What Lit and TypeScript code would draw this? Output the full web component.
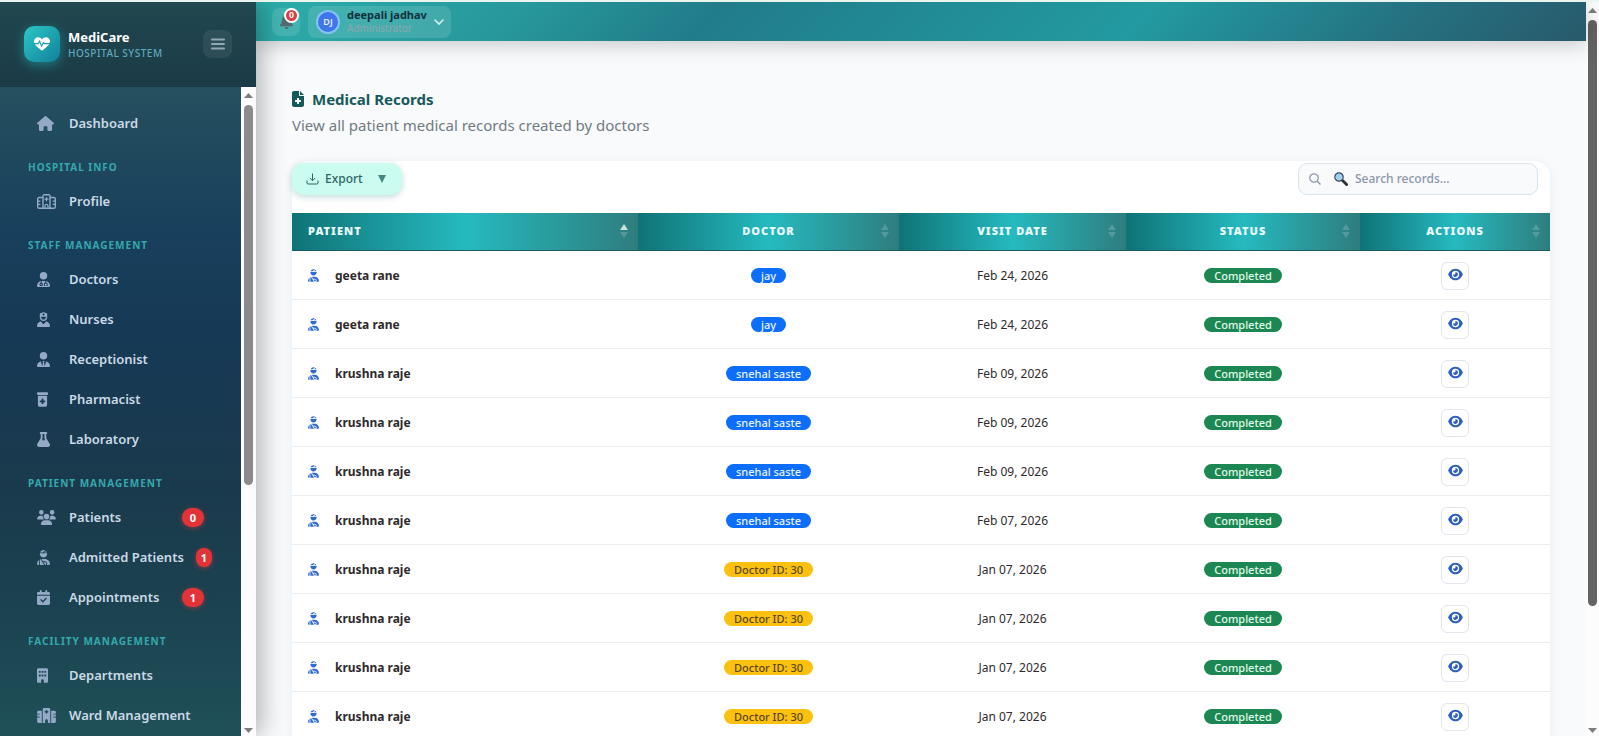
import { LitElement, html, css, svg, nothing } from "lit";
import { customElement } from "lit/decorators.js";
import { classMap } from "lit/directives/class-map.js";

interface Glyph {
  w: number;
  d: string;
}

const GLYPHS: Record<string, Glyph> = {
  house: {
    w: 576,
    d: "M575.8 255.5c0 18-15 32.1-32 32.1h-32l.7 160.2c0 2.7-.2 5.4-.5 8.1V472c0 22.1-17.9 40-40 40H456c-1.1 0-2.2 0-3.3-.1c-1.4 .1-2.8 .1-4.2 .1H416 392c-22.1 0-40-17.9-40-40V448 384c0-17.7-14.3-32-32-32H256c-17.7 0-32 14.3-32 32v64 24c0 22.1-17.9 40-40 40H160 128.1c-1.5 0-3-.1-4.5-.2c-1.2 .1-2.4 .2-3.6 .2H104c-22.1 0-40-17.9-40-40V360c0-.9 0-1.9 .1-2.8V287.6H32c-18 0-32-14-32-32.1c0-9 3-17 10-24L266.4 8c7-7 15-8 22-8s15 2 21 7L564.8 231.5c8 7 12 15 11 24z",
  },
  doctor: {
    w: 448,
    d: "M224 256A128 128 0 1 0 224 0a128 128 0 1 0 0 256zm-96 55.2C54 332.9 0 401.3 0 482.3C0 498.7 13.3 512 29.7 512H418.3c16.4 0 29.7-13.3 29.7-29.7c0-81-54-149.4-128-171.1V362c27.6 7.1 48 32.2 48 62v40c0 8.8-7.2 16-16 16H336c-8.8 0-16-7.2-16-16s7.2-16 16-16V424c0-17.7-14.3-32-32-32s-32 14.3-32 32v24c8.8 0 16 7.2 16 16s-7.2 16-16 16H256c-8.8 0-16-7.2-16-16V424c0-29.8 20.4-54.9 48-62V304.9c-6-.6-12.1-.9-18.3-.9H178.3c-6.2 0-12.3 .3-18.3 .9v65.4c23.1 6.9 40 28.3 40 53.7c0 30.9-25.1 56-56 56s-56-25.1-56-56c0-25.4 16.9-46.8 40-53.7V311.2zM144 448a24 24 0 1 0 0-48 24 24 0 1 0 0 48z",
  },
  nurse: {
    w: 448,
    d: "M96 128V70.2c0-13.3 8.3-25.3 20.8-30l96-36c7.2-2.7 15.2-2.7 22.5 0l96 36c12.5 4.7 20.8 16.6 20.8 30V128h-.3c.2 2.6 .3 5.3 .3 8v40c0 70.7-57.3 128-128 128s-128-57.3-128-128V136c0-2.7 .1-5.4 .3-8H96zm48 48c0 44.2 35.8 80 80 80s80-35.8 80-80V160H144v16zM111.9 327.7c10.5-3.4 21.8 .4 29.4 8.5l71 75.5c6.3 6.7 17 6.7 23.3 0l71-75.5c7.6-8.1 18.9-11.9 29.4-8.5C401 348.6 448 409.4 448 481.3c0 17-13.8 30.7-30.7 30.7H30.7C13.8 512 0 498.2 0 481.3c0-71.9 47-132.7 111.9-153.6zM208 48V64H192c-4.4 0-8 3.6-8 8V88c0 4.4 3.6 8 8 8h16v16c0 4.4 3.6 8 8 8h16c4.4 0 8-3.6 8-8V96h16c4.4 0 8-3.6 8-8V72c0-4.4-3.6-8-8-8H240V48c0-4.4-3.6-8-8-8H216c-4.4 0-8 3.6-8 8z",
  },
  tie: {
    w: 448,
    d: "M224 256A128 128 0 1 0 224 0a128 128 0 1 0 0 256zM209.1 359.2l-18.6-31c-6.4-10.7 1.3-24.2 13.7-24.2H224h19.7c12.4 0 20.1 13.6 13.7 24.2l-18.6 31 33.4 123.9 39.5-161.2c77.2 12 136.3 78.8 136.3 159.4c0 17-13.8 30.7-30.7 30.7H265 183 30.7C13.8 512 0 498.2 0 481.3c0-80.6 59.1-147.4 136.3-159.4l39.5 161.2 33.4-123.9z",
  },
  bottle: {
    w: 384,
    d: "M0 32C0 14.3 14.3 0 32 0H352c17.7 0 32 14.3 32 32V64c0 17.7-14.3 32-32 32H32C14.3 96 0 81.7 0 64V32zm32 96H352V448c0 35.3-28.7 64-64 64H96c-35.3 0-64-28.7-64-64V128zM160 240v48H112c-8.8 0-16 7.2-16 16v32c0 8.8 7.2 16 16 16h48v48c0 8.8 7.2 16 16 16h32c8.8 0 16-7.2 16-16V352h48c8.8 0 16-7.2 16-16V304c0-8.8-7.2-16-16-16H224V240c0-8.8-7.2-16-16-16H176c-8.8 0-16 7.2-16 16z",
  },
  flask: {
    w: 448,
    d: "M437.2 403.5L320 215V64h8c13.3 0 24-10.7 24-24V24c0-13.3-10.7-24-24-24H120c-13.3 0-24 10.7-24 24v16c0 13.3 10.7 24 24 24h8v151L10.8 403.5C-18.5 450.6 15.3 512 70.9 512h306.2c55.7 0 89.4-61.5 60.1-108.5zM170 280l16.100-37.600c3.7-5.2 5.8-11.6 5.8-18.4V64h64v160c0 6.9 2.2 13.2 5.8 18.4l16.200 37.600z",
  },
  users: {
    w: 640,
    d: "M144 0a80 80 0 1 1 0 160A80 80 0 1 1 144 0zM512 0a80 80 0 1 1 0 160A80 80 0 1 1 512 0zM0 298.7C0 239.8 47.8 192 106.7 192h42.7c15.9 0 31 3.5 44.6 9.7c-1.3 7.2-1.9 14.7-1.9 22.3c0 38.2 16.8 72.5 43.3 96c-.2 0-.4 0-.7 0H21.3C9.6 320 0 310.4 0 298.7zM405.3 320c-.2 0-.4 0-.7 0c26.6-23.5 43.3-57.8 43.3-96c0-7.6-.7-15-1.9-22.3c13.6-6.3 28.7-9.7 44.6-9.7h42.7C592.2 192 640 239.8 640 298.7c0 11.8-9.6 21.3-21.3 21.3H405.3zM224 224a96 96 0 1 1 192 0 96 96 0 1 1 -192 0zM128 485.3C128 411.7 187.7 352 261.3 352H378.7C452.3 352 512 411.7 512 485.3c0 14.7-11.9 26.7-26.7 26.7H154.7c-14.7 0-26.7-11.9-26.7-26.7z",
  },
  injured: {
    w: 448,
    d: "M240 80H342.7c-7.9-19.5-20.4-36.5-36.2-49.9L240 80zm37.7-68.2C261.3 4.2 243.2 0 224 0c-53.7 0-99.3 33.1-118.7 80h81.4l91-68.2zM224 256c70.7 0 128-57.3 128-128c0-5.4-.3-10.8-1-16H97c-.7 5.2-1 10.6-1 16c0 70.7 57.3 128 128 128zM124 312.4c-9.7 3.1-19.1 7-28 11.7V512H243.7L181.5 408.2 124 312.4zm33-7.2L204.3 384H272c44.2 0 80 35.8 80 80c0 18-6 34.6-16 48h82.3c16.4 0 29.7-13.3 29.7-29.7C448 383.8 368.2 304 269.7 304H178.3c-7.2 0-14.3 .4-21.3 1.3zM0 482.3C0 498.7 13.3 512 29.7 512H64V345.4C24.9 378.1 0 427.3 0 482.3zM320 464c0-26.5-21.5-48-48-48H223.5l57.1 95.2C303 507.2 320 487.6 320 464z",
  },
  calendar: {
    w: 448,
    d: "M128 0c17.7 0 32 14.3 32 32V64H288V32c0-17.7 14.3-32 32-32s32 14.3 32 32V64h48c26.5 0 48 21.5 48 48v48H0V112C0 85.5 21.5 64 48 64H96V32c0-17.7 14.3-32 32-32zM0 192H448V464c0 26.5-21.5 48-48 48H48c-26.5 0-48-21.5-48-48V192zM329 305c9.4-9.4 9.4-24.6 0-33.9s-24.6-9.4-33.9 0l-95 95-47-47c-9.4-9.4-24.6-9.4-33.9 0s-9.4 24.6 0 33.9l64 64c9.4 9.4 24.6 9.4 33.9 0L329 305z",
  },
  building: {
    w: 384,
    d: "M48 0C21.5 0 0 21.5 0 48V464c0 26.5 21.5 48 48 48h96V432c0-26.5 21.5-48 48-48s48 21.5 48 48v80h96c26.5 0 48-21.5 48-48V48c0-26.5-21.5-48-48-48H48zM64 224h64v64H64zM160 224h64v64h-64zM256 224h64v64h-64zM64 96h64v64H64zM160 96h64v64h-64zM256 96h64v64h-64z",
  },
  hospital: {
    w: 640,
    d: "M192 48c0-26.5 21.5-48 48-48H400c26.5 0 48 21.5 48 48V512H368V432c0-26.5-21.5-48-48-48s-48 21.5-48 48v80H192V48zM48 96H160V512H48c-26.5 0-48-21.5-48-48V320H80c8.8 0 16-7.2 16-16s-7.2-16-16-16H0V224H80c8.8 0 16-7.2 16-16s-7.2-16-16-16H0V144c0-26.5 21.5-48 48-48zm544 0c26.5 0 48 21.5 48 48v48H560c-8.8 0-16 7.2-16 16s7.2 16 16 16h80v64H560c-8.8 0-16 7.2-16 16s7.2 16 16 16h80V464c0 26.5-21.5 48-48 48H480V96H592zM312 64c-8.8 0-16 7.2-16 16v24H272c-8.8 0-16 7.2-16 16v16c0 8.8 7.2 16 16 16h24v24c0 8.8 7.2 16 16 16h16c8.8 0 16-7.2 16-16V152h24c8.8 0 16-7.2 16-16V120c0-8.8-7.2-16-16-16H344V80c0-8.8-7.2-16-16-16H312z",
  },
  record: {
    w: 384,
    d: "M64 0C28.7 0 0 28.7 0 64V448c0 35.3 28.7 64 64 64H320c35.3 0 64-28.7 64-64V160H256c-17.7 0-32-14.3-32-32V0H64zM256 0V128H384L256 0zM160 240c0-8.8 7.2-16 16-16h32c8.8 0 16 7.2 16 16v48h48c8.8 0 16 7.2 16 16v32c0 8.8-7.2 16-16 16H224v48c0 8.8-7.2 16-16 16H176c-8.8 0-16-7.2-16-16V352H112c-8.8 0-16-7.2-16-16V304c0-8.8 7.2-16 16-16h48V240z",
  },
  eye: {
    w: 576,
    d: "M288 32c-80.8 0-145.5 36.8-192.6 80.6C48.6 156 17.3 208 2.5 243.7c-3.3 7.9-3.3 16.7 0 24.6C17.3 304 48.6 356 95.4 399.4C142.5 443.2 207.2 480 288 480s145.5-36.8 192.6-80.6c46.8-43.5 78.1-95.4 93-131.1c3.3-7.9 3.3-16.7 0-24.6c-14.9-35.7-46.2-87.7-93-131.1C433.5 68.8 368.8 32 288 32zM144 256a144 144 0 1 1 288 0 144 144 0 1 1 -288 0zm144-64c0 35.3-28.7 64-64 64c-7.1 0-13.9-1.2-20.3-3.3c-5.5-1.8-11.9 1.6-11.7 7.4c.3 6.9 1.3 13.8 3.2 20.7c13.7 51.2 66.4 81.6 117.6 67.9s81.6-66.4 67.9-117.6c-11.1-41.5-47.8-69.4-88.6-71.1c-5.8-.2-9.2 6.1-7.4 11.7c2.1 6.4 3.3 13.2 3.3 20.3z",
  },
  bell: {
    w: 448,
    d: "M224 0c-17.7 0-32 14.3-32 32V51.2C119 66 64 130.6 64 208v18.8c0 47-17.3 92.4-48.5 127.6l-7.4 8.3c-8.4 9.4-10.4 22.9-5.3 34.4S19.4 416 32 416H416c12.6 0 24-7.4 29.2-18.9s3.1-25-5.3-34.4l-7.4-8.3C401.3 319.2 384 273.9 384 226.8V208c0-77.4-55-142-128-156.8V32c0-17.7-14.3-32-32-32zm45.3 493.3c12-12 18.7-28.3 18.7-45.3H224 160c0 17 6.7 33.3 18.7 45.3s28.3 18.7 45.3 18.7s33.3-6.7 45.3-18.7z",
  },
};

const glyph = (name: string, size: number) => {
  const g = GLYPHS[name];
  return html`<svg
    class="glyph"
    viewBox="0 0 ${g.w} 512"
    width=${Math.round((g.w / 512) * size)}
    height=${size}
    aria-hidden="true"
  >
    ${svg`<path fill="currentColor" fill-rule="evenodd" d=${g.d}></path>`}
  </svg>`;
};

const hospitalOutline = html`<svg class="glyph" viewBox="0 0 19 15" width="19" height="15" aria-hidden="true">
  <g fill="none" stroke="currentColor" stroke-width="1.4">
    <path d="M6 14.3V2.2C6 1.3 6.6.7 7.4.7h4.2c.8 0 1.4.6 1.4 1.5v12.1" />
    <path d="M6 3.5H2.2C1.300 3.500.7 4.100.7 5v7.800c0 .9.6 1.500 1.500 1.500h14.600c.9 0 1.500-.6 1.500-1.500V5c0-.9-.6-1.500-1.500-1.500H13" />
    <path d="M.7 7.200h2.600M.7 10.400h2.600M15.700 7.200h2.600M15.700 10.400h2.600" stroke-width="1.200" />
    <path d="M9.500 3.200v4M7.500 5.200h4" stroke-width="1.300" />
    <path d="M8 14.300v-2.600c0-.8.6-1.400 1.500-1.400s1.500.6 1.500 1.400v2.600" stroke-width="1.200" />
  </g>
</svg>`;

interface NavItem {
  icon: string;
  label: string;
  count?: number;
  tight?: boolean;
}

const NAV: { title?: string; items: NavItem[] }[] = [
  { items: [{ icon: "house", label: "Dashboard" }] },
  { title: "Hospital Info", items: [{ icon: "outline", label: "Profile" }] },
  {
    title: "Staff Management",
    items: [
      { icon: "doctor", label: "Doctors" },
      { icon: "nurse", label: "Nurses" },
      { icon: "tie", label: "Receptionist" },
      { icon: "bottle", label: "Pharmacist" },
      { icon: "flask", label: "Laboratory" },
    ],
  },
  {
    title: "Patient Management",
    items: [
      { icon: "users", label: "Patients", count: 0 },
      { icon: "injured", label: "Admitted Patients", count: 1, tight: true },
      { icon: "calendar", label: "Appointments", count: 1 },
    ],
  },
  {
    title: "Facility Management",
    items: [
      { icon: "building", label: "Departments" },
      { icon: "hospital", label: "Ward Management" },
    ],
  },
];

@customElement("side-bar")
class SideBar extends LitElement {
  static styles = css`
    :host {
      display: flex;
      flex-direction: column;
      width: 256px;
      min-height: 0;
      flex: none;
      position: relative;
      z-index: 2;
      background: linear-gradient(180deg, #25505f 12%, #183f5c 32%, #163955 46%, #1a3a4c 66%, #1b4250 82%, #1f5058 100%);
      box-shadow: 4px 0 24px rgba(0, 0, 0, 0.32);
      color: #cbd9e6;
    }
    .glyph {
      display: block;
    }
    .brand {
      display: flex;
      align-items: center;
      gap: 8px;
      height: 85px;
      box-sizing: border-box;
      padding: 0 24px;
      background: linear-gradient(180deg, #21474f, #1b3b47);
      border-bottom: 1px solid #1b3846;
    }
    .logo {
      display: grid;
      place-items: center;
      width: 36px;
      height: 36px;
      border-radius: 10px;
      background: linear-gradient(135deg, #2cc7c6, #118099);
      box-shadow: 0 3px 12px rgba(38, 198, 198, 0.45);
    }
    .names {
      flex: 1;
      display: flex;
      flex-direction: column;
    }
    .name {
      font-size: 13px;
      line-height: 17px;
      font-weight: 700;
      color: #fff;
    }
    .sub {
      font-size: 10px;
      line-height: 14px;
      font-weight: 500;
      letter-spacing: 0.5px;
      text-transform: uppercase;
      color: #5ea9bd;
    }
    .toggle {
      display: grid;
      place-items: center;
      width: 29px;
      height: 28px;
      padding: 0;
      border: 0;
      border-radius: 8px;
      background: rgba(255, 255, 255, 0.07);
      color: #93a8b5;
    }
    .body {
      flex: 1;
      min-height: 0;
      display: flex;
    }
    nav {
      flex: 1;
      overflow: hidden;
      padding: 16px 0 0 28px;
    }
    .title {
      margin: 0;
      padding: 14px 0 8px;
      height: 38px;
      box-sizing: border-box;
      font-size: 10px;
      line-height: 20px;
      font-weight: 700;
      letter-spacing: 1px;
      text-transform: uppercase;
      color: #36a8ad;
    }
    ul {
      margin: 0;
      padding: 0;
      list-style: none;
    }
    .link {
      display: flex;
      align-items: center;
      height: 40px;
      width: 176px;
      padding-left: 9px;
      box-sizing: border-box;
      color: inherit;
      text-decoration: none;
      font-size: 13px;
      line-height: 20px;
      font-weight: 600;
      white-space: nowrap;
    }
    .ico {
      flex: none;
      width: 32px;
      color: #93a9c6;
    }
    .count {
      flex: none;
      margin-left: auto;
      padding: 0 8px;
      border-radius: 10px;
      background: #e43338;
      box-shadow: 0 1px 5px rgba(239, 60, 60, 0.5);
      color: #fff;
      font-size: 11px;
      line-height: 19px;
      font-weight: 700;
    }
    .count.tight {
      margin-left: 12px;
      padding: 0 5px;
    }
    .track {
      flex: none;
      display: flex;
      flex-direction: column;
      align-items: center;
      justify-content: space-between;
      width: 15px;
      padding: 6px 0 3px;
      box-sizing: border-box;
      background: #fcfcfc;
    }
    .thumb {
      flex: 1;
      width: 9px;
      margin: 7px 0 243px;
      border-radius: 5px;
      background: #8b8b8b;
    }
  `;

  render() {
    return html`
      <header class="brand">
        <span class="logo">
          <svg class="glyph" viewBox="0 0 16 14" width="16" height="14" aria-hidden="true">
            <path fill="#fff" d="M8 13.700C4.500 11 0 8 0 4.300 0 2 1.800.3 4 .3c1.600 0 3 .8 4 2.200C9 1.100 10.400.3 12 .3c2.200 0 4 1.700 4 4C16 8 11.500 11 8 13.700z" />
            <path fill="none" stroke="#1d9dab" stroke-width="1.100" d="M0 6.600h4.300l1.300-2.300 2 4.600 1.800-3.300.9 1H16" />
          </svg>
        </span>
        <span class="names">
          <span class="name">MediCare</span>
          <span class="sub">Hospital System</span>
        </span>
        <button class="toggle" type="button" aria-label="Toggle menu">
          <svg class="glyph" viewBox="0 0 14 12" width="14" height="12" aria-hidden="true">
            <path d="M1 1.500h12M1 6h12M1 10.500h12" stroke="currentColor" stroke-width="2" stroke-linecap="round" />
          </svg>
        </button>
      </header>
      <div class="body">
        <nav>
          ${NAV.map(
            (group) => html`
              ${group.title ? html`<h2 class="title">${group.title}</h2>` : nothing}
              <ul>
                ${group.items.map(
                  (item) => html`<li>
                    <a class="link" href="#">
                      <span class="ico">${item.icon === "outline" ? hospitalOutline : glyph(item.icon, 15)}</span>
                      <span>${item.label}</span>
                      ${item.count === undefined
                        ? nothing
                        : html`<span class=${classMap({ count: true, tight: !!item.tight })}>${item.count}</span>`}
                    </a>
                  </li>`
                )}
              </ul>
            `
          )}
        </nav>
        <div class="track" aria-hidden="true">
          <svg class="glyph" width="9" height="5" viewBox="0 0 9 5"><path fill="#7d7d7d" d="M0 5 4.500 0 9 5z" /></svg>
          <div class="thumb"></div>
          <svg class="glyph" width="9" height="5" viewBox="0 0 9 5"><path fill="#7d7d7d" d="M0 0 4.500 5 9 0z" /></svg>
        </div>
      </div>
    `;
  }
}

@customElement("top-bar")
class TopBar extends LitElement {
  static styles = css`
    :host {
      display: flex;
      align-items: center;
      gap: 8px;
      height: 39px;
      box-sizing: border-box;
      padding: 0 16px;
      flex: none;
      background: linear-gradient(135deg, #2cadaa 0%, #27989c 20%, #217c89 34%, #229aa0 66%, #257080 86%, #285a6b 100%);
      box-shadow: 0 4px 20px rgba(0, 0, 0, 0.2);
      position: relative;
      z-index: 1;
    }
    .glyph {
      display: block;
    }
    .bell {
      position: relative;
      display: grid;
      place-items: center;
      width: 28px;
      height: 28px;
      padding: 0;
      border: 0;
      border-radius: 8px;
      background: rgba(255, 255, 255, 0.12);
      color: #56696e;
    }
    .alert {
      position: absolute;
      top: 0;
      right: 1px;
      width: 11px;
      height: 11px;
      border: 2px solid #fff;
      border-radius: 50%;
      background: #dc3d45;
      color: #fff;
      font-size: 9px;
      line-height: 10px;
      font-weight: 700;
      text-align: center;
    }
    .user {
      display: flex;
      align-items: center;
      gap: 7px;
      height: 32px;
      padding: 0 7px 0 8px;
      border: 0;
      border-radius: 8px;
      background: rgba(255, 255, 255, 0.12);
      font-family: inherit;
      text-align: left;
    }
    .avatar {
      width: 20px;
      height: 20px;
      border: 2px solid #86c3f3;
      border-radius: 50%;
      background: #3f76ea;
      color: #e6f0ff;
      font-size: 9px;
      line-height: 20px;
      font-weight: 600;
      text-align: center;
    }
    .who {
      display: flex;
      flex-direction: column;
    }
    .name {
      font-size: 11px;
      line-height: 14px;
      font-weight: 700;
      color: #10313d;
    }
    .role {
      font-size: 10px;
      line-height: 13px;
      color: #8fa6ad;
    }
  `;

  render() {
    return html`
      <button class="bell" type="button" aria-label="Notifications">
        ${glyph("bell", 15)}
        <span class="alert">0</span>
      </button>
      <button class="user" type="button">
        <span class="avatar">DJ</span>
        <span class="who">
          <span class="name">deepali jadhav</span>
          <span class="role">Administrator</span>
        </span>
        <svg class="glyph" viewBox="0 0 10 6" width="10" height="6" aria-hidden="true">
          <path d="M1 1l4 4 4-4" fill="none" stroke="#d8f2f2" stroke-width="1.600" stroke-linecap="round" />
        </svg>
      </button>
    `;
  }
}

interface MedicalRecord {
  patient: string;
  doctor: string;
  known: boolean;
  date: string;
}

const rec = (patient: string, doctor: string, date: string, known = true): MedicalRecord => ({
  patient,
  doctor,
  date,
  known,
});

const RECORDS: MedicalRecord[] = [
  rec("geeta rane", "jay", "Feb 24, 2026"),
  rec("geeta rane", "jay", "Feb 24, 2026"),
  rec("krushna raje", "snehal saste", "Feb 09, 2026"),
  rec("krushna raje", "snehal saste", "Feb 09, 2026"),
  rec("krushna raje", "snehal saste", "Feb 09, 2026"),
  rec("krushna raje", "snehal saste", "Feb 07, 2026"),
  rec("krushna raje", "Doctor ID: 30", "Jan 07, 2026", false),
  rec("krushna raje", "Doctor ID: 30", "Jan 07, 2026", false),
  rec("krushna raje", "Doctor ID: 30", "Jan 07, 2026", false),
  rec("krushna raje", "Doctor ID: 30", "Jan 07, 2026", false),
];

const COLUMNS = ["Patient", "Doctor", "Visit Date", "Status", "Actions"];

@customElement("records-page")
class RecordsPage extends LitElement {
  static styles = css`
    :host {
      display: block;
      flex: 1;
      min-height: 0;
      overflow: hidden;
      padding: 46px 36px 0;
      background: #f8fafc;
    }
    .glyph {
      display: block;
    }
    h1 {
      display: flex;
      align-items: center;
      gap: 8px;
      margin: 0;
      font-size: 15px;
      line-height: 24px;
      font-weight: 700;
      color: #17595a;
    }
    .lead {
      margin: 2px 0 23px;
      font-size: 15px;
      line-height: 25px;
      color: #727a82;
    }
    .card {
      border-radius: 16px 16px 0 0;
      background: #fff;
      box-shadow: 0 2px 12px rgba(30, 60, 80, 0.06);
    }
    .tools {
      display: flex;
      justify-content: space-between;
      align-items: flex-start;
      padding: 2px 12px 18px 0;
    }
    .export {
      display: flex;
      align-items: center;
      gap: 6px;
      width: 110px;
      height: 32px;
      padding: 0 0 0 14px;
      border: 0;
      border-radius: 12px;
      background: #ccfbf0;
      box-shadow: 0 2px 6px rgba(20, 110, 110, 0.25);
      color: #2a6664;
      font-family: inherit;
      font-size: 12px;
      line-height: 18px;
      font-weight: 500;
    }
    .caret {
      margin-left: 9px;
    }
    .search {
      display: flex;
      align-items: center;
      width: 240px;
      height: 32px;
      box-sizing: border-box;
      padding: 0 10px;
      border: 1px solid #d9e3ec;
      border-radius: 9px;
      background: #f8fafc;
    }
    .lens {
      margin: 0 7px 0 13px;
    }
    input {
      flex: 1;
      min-width: 0;
      padding: 0;
      border: 0;
      outline: 0;
      background: none;
      font-family: inherit;
      font-size: 12px;
      line-height: 18px;
      font-weight: 500;
      color: #334155;
    }
    input::placeholder {
      color: #8b96aa;
      opacity: 1;
    }
    table {
      width: 100%;
      border-collapse: collapse;
      table-layout: fixed;
    }
    .c-doctor {
      width: 261px;
    }
    .c-date {
      width: 227px;
    }
    .c-status {
      width: 234px;
    }
    .c-actions {
      width: 190px;
    }
    th {
      height: 37px;
      box-sizing: border-box;
      padding: 0;
      background: linear-gradient(90deg, #0f7377 0%, #25babf 50%, #2f7d7e 100%);
      border-bottom: 1px solid #1b5b60;
      color: #e9fbfb;
      font-size: 11px;
      line-height: 18px;
      font-weight: 900;
      letter-spacing: 1px;
      text-transform: uppercase;
    }
    .cell {
      display: grid;
      grid-template-columns: 18px 1fr 18px;
      align-items: center;
    }
    .cell.first {
      grid-template-columns: 1fr 18px;
      padding-left: 16px;
      text-align: left;
    }
    td {
      height: 49px;
      box-sizing: border-box;
      padding: 2px 0 0;
      border-bottom: 1px solid #ebeef0;
      text-align: center;
      font-size: 12px;
      line-height: 18px;
      color: #2f2a2d;
    }
    .person {
      display: flex;
      align-items: center;
      gap: 16px;
      padding-left: 16px;
      font-size: 12px;
      font-weight: 700;
    }
    .person .glyph {
      color: #2f6ad0;
    }
    .pill {
      display: inline-block;
      padding: 0 10px;
      border-radius: 8px;
      background: #0d6efd;
      color: #e8f3ff;
      font-size: 11px;
      line-height: 15px;
      font-weight: 500;
    }
    .pill.unknown {
      background: #fbc111;
      color: #5b481a;
    }
    .pill.done {
      background: #1c8753;
      color: #e0fbe9;
    }
    .view {
      display: inline-grid;
      justify-items: center;
      align-items: start;
      width: 28px;
      height: 28px;
      padding: 5px 0 0;
      box-sizing: border-box;
      border: 1px solid #e3e5ee;
      border-radius: 6px;
      background: #fff;
      color: #2f5fc2;
      vertical-align: middle;
    }
  `;

  private sorter(asc: boolean) {
    return html`<svg class="glyph" width="8" height="14" viewBox="0 0 8 14" aria-hidden="true">
      <path fill="#fff" fill-opacity=${asc ? 0.75 : 0.18} d="M0 6 4 0l4 6z" />
      <path fill="#fff" fill-opacity="0.18" d="M0 8l4 6 4-6z" />
    </svg>`;
  }

  render() {
    return html`
      <h1>${glyph("record", 16)}<span>Medical Records</span></h1>
      <p class="lead">View all patient medical records created by doctors</p>
      <section class="card">
        <div class="tools">
          <button class="export" type="button">
            <svg class="glyph" viewBox="0 0 13 12" width="13" height="12" aria-hidden="true">
              <path d="M1 7.500v2.500c0 .6.4 1 1 1h9c.6 0 1-.4 1-1V7.500M6.500.500v7M3.800 5l2.700 2.700L9.200 5" fill="none" stroke="currentColor" />
            </svg>
            <span>Export</span>
            <svg class="glyph caret" viewBox="0 0 8 8" width="8" height="8" aria-hidden="true">
              <path d="M0 0h8L4 8z" fill="#45877f" />
            </svg>
          </button>
          <label class="search" aria-label="Search records">
            <svg class="glyph" viewBox="0 0 12 12" width="12" height="12" aria-hidden="true">
              <circle cx="5" cy="5" r="4.200" fill="none" stroke="#8e99aa" stroke-width="1.300" />
              <path d="M8 8l3.500 3.500" stroke="#8e99aa" stroke-width="1.500" />
            </svg>
            <svg class="glyph lens" viewBox="0 0 14 14" width="14" height="14" aria-hidden="true">
              <path d="M8 8l4.600 4.600" stroke="#2b2f36" stroke-width="2.800" stroke-linecap="round" />
              <circle cx="5" cy="5" r="4.200" fill="#a3d0ee" stroke="#3c4a5a" stroke-width="1.200" />
            </svg>
            <input type="text" placeholder="Search records..." />
          </label>
        </div>
        <table>
          <colgroup>
            <col />
            <col class="c-doctor" />
            <col class="c-date" />
            <col class="c-status" />
            <col class="c-actions" />
          </colgroup>
          <thead>
            <tr>
              ${COLUMNS.map(
                (name, i) => html`<th scope="col">
                  <div class=${classMap({ cell: true, first: i === 0 })}>
                    ${i === 0 ? nothing : html`<span></span>`}
                    <span>${name}</span>
                    ${this.sorter(i === 0)}
                  </div>
                </th>`
              )}
            </tr>
          </thead>
          <tbody>
            ${RECORDS.map(
              (r) => html`<tr>
                <td><div class="person">${glyph("injured", 13)}<span>${r.patient}</span></div></td>
                <td><span class=${classMap({ pill: true, unknown: !r.known })}>${r.doctor}</span></td>
                <td>${r.date}</td>
                <td><span class="pill done">Completed</span></td>
                <td><button class="view" type="button" aria-label="View record">${glyph("eye", 13)}</button></td>
              </tr>`
            )}
          </tbody>
        </table>
      </section>
    `;
  }
}

@customElement("app-root")
class AppRoot extends LitElement {
  static styles = css`
    :host {
      display: flex;
      height: 100vh;
      box-sizing: border-box;
      overflow: hidden;
      border-top: 2px solid #e9f5ee;
      background: #f8fafc;
      font-family: "Noto Sans", "Open Sans", sans-serif;
    }
    main {
      flex: 1;
      min-width: 0;
      display: flex;
      flex-direction: column;
    }
    .glyph {
      display: block;
    }
    .track {
      flex: none;
      display: flex;
      flex-direction: column;
      align-items: center;
      width: 13px;
      padding: 6px 0 3px;
      box-sizing: border-box;
      background: #fcfcfc;
    }
    .thumb {
      flex: 1;
      width: 9px;
      margin: 7px 0 122px;
      border-radius: 5px;
      background: #636363;
    }
  `;

  render() {
    return html`
      <side-bar></side-bar>
      <main>
        <top-bar></top-bar>
        <records-page></records-page>
      </main>
      <div class="track" aria-hidden="true">
        <svg class="glyph" width="9" height="5" viewBox="0 0 9 5"><path fill="#7d7d7d" d="M0 5 4.500 0 9 5z" /></svg>
        <div class="thumb"></div>
        <svg class="glyph" width="9" height="5" viewBox="0 0 9 5"><path fill="#7d7d7d" d="M0 0 4.500 5 9 0z" /></svg>
      </div>
    `;
  }
}
